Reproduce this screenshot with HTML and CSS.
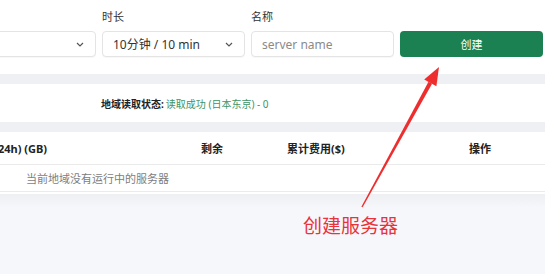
FILE: index.html
```html
<!DOCTYPE html>
<html lang="zh-CN">
<head>
<meta charset="utf-8">
<title>服务器</title>
<link rel="stylesheet" href="styles.css">
</head>
<body>
<div class="page">
  <section class="toolbar">
    <div class="field field-region">
      <div class="label">&nbsp;</div>
      <div class="control select">
        <span class="value"></span>
        <svg class="chev" width="8" height="5" viewBox="0 0 8 5"><path d="M1 1l3 3 3-3" fill="none" stroke="#555" stroke-width="1.2"/></svg>
      </div>
    </div>
    <div class="field field-time">
      <div class="label">时长</div>
      <div class="control select">
        <span class="value">10分钟 / 10 min</span>
        <svg class="chev" width="8" height="5" viewBox="0 0 8 5"><path d="M1 1l3 3 3-3" fill="none" stroke="#555" stroke-width="1.2"/></svg>
      </div>
    </div>
    <div class="field field-name">
      <div class="label">名称</div>
      <div class="control input"><span class="placeholder">server name</span></div>
    </div>
    <div class="field field-btn">
      <div class="label">&nbsp;</div>
      <button class="btn">创建</button>
    </div>
  </section>

  <div class="band"></div>

  <section class="status">
    <span class="status-key">地域读取状态:</span>
    <span class="status-val">读取成功 (日本东京) - 0</span>
  </section>

  <div class="band"></div>

  <section class="table">
    <div class="row head">
      <div class="c c1">24h) (GB)</div>
      <div class="c c2">剩余</div>
      <div class="c c3">累计费用($)</div>
      <div class="c c4">操作</div>
    </div>
    <div class="row empty">
      <div class="c cempty">当前地域没有运行中的服务器</div>
    </div>
  </section>

  <div class="rest"></div>
</div>

<svg class="arrow" width="545" height="274" viewBox="0 0 545 274">
  <polygon points="361.4,206.7 362.6,207.3 432.1,83.8 428.5,81.8" fill="#ee2e2e"/>
  <polygon points="439,67 424.2,79.4 436.4,86.2" fill="#ee2e2e"/>
</svg>
<div class="note">创建服务器</div>
</body>
</html>
```

FILE: styles.css
```css
html, body {
  margin: 0;
  padding: 0;
}
body {
  width: 545px;
  height: 274px;
  overflow: hidden;
  position: relative;
  background: #f6f7fa;
  font-family: "Noto Sans", "Noto Sans CJK SC", sans-serif;
  color: #222;
}
.page {
  display: flex;
  flex-direction: column;
}
.toolbar {
  background: #fff;
  height: 74px;
  box-sizing: border-box;
  padding-top: 9px;
  display: flex;
  gap: 6px;
  margin-left: -30px;
}
.field {
  display: flex;
  flex-direction: column;
}
.label {
  font-size: 11px;
  line-height: 16px;
  height: 16px;
  color: #333;
  margin-bottom: 6px;
}
.field-region { width: 126px; }
.field-time { width: 143px; }
.field-name { width: 143px; }
.field-btn { width: 143px; }
.control {
  height: 26px;
  box-sizing: border-box;
  border: 1px solid #e4e4e4;
  border-radius: 4px;
  background: #fff;
  display: flex;
  align-items: center;
  padding: 0 10px;
  font-size: 12px;
  box-shadow: 0 1px 1px rgba(0,0,0,0.03);
}
.select {
  justify-content: space-between;
}
.value { color: #333; }
.chev { margin-right: 1px; }
.placeholder { color: #8a8a8a; padding-left: -1px; }
.btn {
  height: 26px;
  border: none;
  border-radius: 4px;
  background: #1c8152;
  color: #fff;
  font-family: "Noto Sans CJK SC", sans-serif;
  font-size: 11px;
  padding: 0;
  width: 143px;
}
.band {
  height: 10px;
  background: #eff0f4;
}
.status {
  background: #fff;
  height: 38px;
  display: flex;
  align-items: center;
  padding-left: 101px;
  font-size: 10px;
}
.status-key {
  font-weight: 700;
  color: #222;
  margin-right: 2px;
}
.status-val {
  color: #3c9467;
}
.table {
  background: #fff;
  padding-bottom: 2px;
}
.row {
  display: flex;
  align-items: center;
  border-bottom: 1px solid #ebebeb;
}
.head {
  height: 32px;
  font-size: 11px;
  font-weight: 700;
  color: #222;
}
.c1 { width: 203px; margin-left: -2px; }
.c2 { width: 86px; }
.c3 { width: 182px; }
.c4 { width: 60px; }
.empty {
  height: 26px;
  font-size: 11px;
  color: #7d7d7d;
}
.cempty { padding-left: 26px; }
.rest {
  height: 90px;
  background: linear-gradient(#eeeff3, #f6f7fa 14px);
}
.arrow {
  position: absolute;
  left: 0;
  top: 0;
}
.note {
  position: absolute;
  left: 303px;
  top: 212px;
  font-family: "Noto Sans CJK SC", sans-serif;
  font-size: 19px;
  line-height: 26px;
  color: #e8333b;
}
```
